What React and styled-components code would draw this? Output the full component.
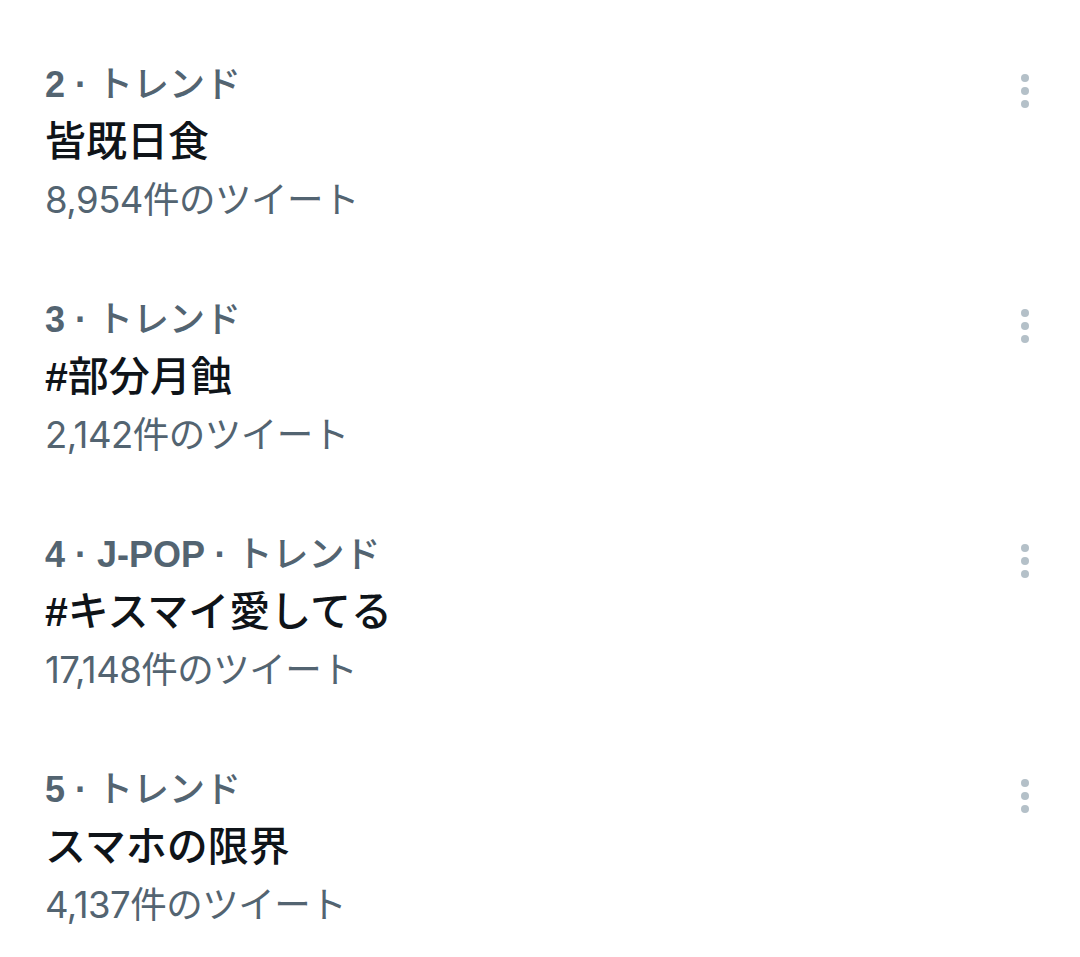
import React from "react";
import styled, { createGlobalStyle } from "styled-components";

const Global = createGlobalStyle`
  body {
    margin: 0;
    background: #ffffff;
    font-family: "Liberation Sans", "Noto Sans CJK JP", sans-serif;
  }
`;

const List = styled.div`
  width: 1080px;
  padding-top: 25px;
  display: flex;
  flex-direction: column;
`;

const Row = styled.div`
  display: flex;
  align-items: flex-start;
  justify-content: space-between;
  padding: 32px 30px 31px 45px;
`;

const Texts = styled.div`
  display: flex;
  flex-direction: column;
`;

const Meta = styled.div`
  height: 56px;
  line-height: 56px;
  font-size: 36px;
  font-weight: 700;
  color: #536471;
  white-space: nowrap;
`;

const Kana = styled.span`
  font-weight: 500;
`;

const Title = styled.div`
  height: 58px;
  line-height: 58px;
  font-size: 41px;
  font-weight: 500;
  color: #0f1419;
  white-space: nowrap;
`;

const Hash = styled.span`
  font-weight: 700;
`;

const Count = styled.div`
  height: 58px;
  line-height: 58px;
  font-size: 36.5px;
  font-family: Inter, "Noto Sans CJK JP", sans-serif;
  font-variant-numeric: proportional-nums;
  letter-spacing: -0.5px;
  color: #536471;
  white-space: nowrap;
`;

const More = styled.div`
  width: 50px;
  height: 50px;
  margin-top: 9px;
  display: flex;
  align-items: center;
  justify-content: center;
  color: #b4c0c8;
`;

const trends = [
  { meta: ["2", "トレンド"], title: "皆既日食", count: "8,954件のツイート" },
  { meta: ["3", "トレンド"], title: "#部分月蝕", count: "2,142件のツイート" },
  { meta: ["4", "J-POP", "トレンド"], title: "#キスマイ愛してる", count: "17,148件のツイート" },
  { meta: ["5", "トレンド"], title: "スマホの限界", count: "4,137件のツイート" },
];

const Dots = () => (
  <svg width="12" height="40" viewBox="0 0 12 40" fill="currentColor">
    <circle cx="6" cy="7" r="4" />
    <circle cx="6" cy="20" r="4" />
    <circle cx="6" cy="33" r="4" />
  </svg>
);

const App = () => (
  <>
    <Global />
    <List>
      {trends.map((t, i) => (
        <Row key={i}>
          <Texts>
            <Meta>
              {t.meta.map((m, j) => (
                <React.Fragment key={j}>
                  {j > 0 && " · "}
                  {/^[\x00-\x7f]+$/.test(m) ? m : <Kana>{m}</Kana>}
                </React.Fragment>
              ))}
            </Meta>
            <Title>
              {t.title.startsWith("#") ? (
                <>
                  <Hash>#</Hash>
                  {t.title.slice(1)}
                </>
              ) : (
                t.title
              )}
            </Title>
            <Count>{t.count}</Count>
          </Texts>
          <More>
            <Dots />
          </More>
        </Row>
      ))}
    </List>
  </>
);

export default App;
